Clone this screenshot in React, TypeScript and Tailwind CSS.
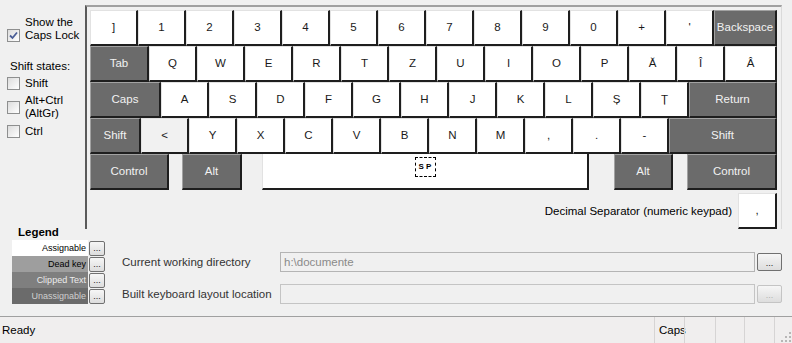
import type { ReactNode } from 'react'

const keyBase =
  'flex h-[36px] shrink-0 items-center justify-center border-t border-l border-r-2 border-b-2 border-r-[#1e1e1e] border-b-[#1e1e1e] text-[11.5px]'
const lightKey = 'bg-white border-t-[#e2e2e2] border-l-[#e2e2e2] text-[#1a1a1a]'
const darkKey = 'bg-[#6b6b6b] border-t-[#a2a2a2] border-l-[#a2a2a2] text-[#f2f2f2]'

function Key({ label, className, dark }: { label?: ReactNode; className: string; dark?: boolean }) {
  return <div className={`${keyBase} ${dark ? darkKey : lightKey} ${className}`}>{label}</div>
}

function Checkbox({ checked }: { checked?: boolean }) {
  return (
    <span className="flex size-[13px] shrink-0 items-center justify-center border border-[#8e8f8f] bg-gradient-to-br from-[#dcdcdc] to-white">
      {checked ? (
        <svg width="11" height="11" viewBox="0 0 11 11">
          <path d="M2 5.5 L4.5 8 L9 2.5" fill="none" stroke="#4a5d96" strokeWidth="1.8" />
        </svg>
      ) : null}
    </span>
  )
}

function EllipsisButton({ disabled, className }: { disabled?: boolean; className: string }) {
  return (
    <div
      className={`flex shrink-0 items-end justify-center rounded-[2px] border bg-gradient-to-b from-[#f6f6f6] to-[#dddddd] pb-[2px] text-[9px] leading-none ${
        disabled ? 'border-[#c4c4c4] text-[#b0b0b0]' : 'border-[#707070] text-[#222]'
      } ${className}`}
    >
      ...
    </div>
  )
}

const row1 = [']', '1', '2', '3', '4', '5', '6', '7', '8', '9', '0', '+', "'"]
const row2 = ['Q', 'W', 'E', 'R', 'T', 'Z', 'U', 'I', 'O', 'P', 'Ă', 'Î']
const row3 = ['A', 'S', 'D', 'F', 'G', 'H', 'J', 'K', 'L', 'Ș', 'Ț']
const row4 = ['Y', 'X', 'C', 'V', 'B', 'N', 'M', ',', '.', '-']

const legend = [
  { label: 'Assignable', className: 'bg-white text-black' },
  { label: 'Dead key', className: 'bg-[#9e9e9e] text-black' },
  { label: 'Clipped Text', className: 'bg-[#7f7f7f] text-[#ececec]' },
  { label: 'Unassignable', className: 'bg-[#6b6b6b] text-[#cfcfcf]' },
]

export default function App() {
  return (
    <div className="flex h-[343px] w-[792px] flex-col overflow-hidden bg-[#f0f0f0] font-['Liberation_Sans',Arial,sans-serif] text-[11.5px] leading-[13px] text-black">
      <div className="flex h-[229px] shrink-0">
        {/* shift state options */}
        <div className="flex w-[85px] shrink-0 flex-col pl-[7px] pt-[16px]">
          <div className="flex gap-[5px]">
            <span className="mt-[13px]">
              <Checkbox checked />
            </span>
            <span>
              Show the
              <br />
              Caps Lock
            </span>
          </div>
          <div className="mt-[18px] pl-[3px]">Shift states:</div>
          <div className="mt-[4px] flex items-center gap-[5px]">
            <Checkbox />
            <span>Shift</span>
          </div>
          <div className="mt-[4px] flex items-center gap-[5px]">
            <Checkbox />
            <span>
              Alt+Ctrl
              <br />
              (AltGr)
            </span>
          </div>
          <div className="mt-[5px] flex items-center gap-[5px]">
            <Checkbox />
            <span>Ctrl</span>
          </div>
        </div>

        {/* keyboard */}
        <div className="mt-[5px] h-[224px] w-[697px] shrink-0 border-t-2 border-l-2 border-r border-t-[#a0a0a0] border-l-[#5a5a5a] border-r-[#dadada] pl-[3px] pt-[3px]">
          <div className="flex">
            {row1.map((k) => (
              <Key key={k} label={k} className="w-[48px]" />
            ))}
            <Key label="Backspace" dark className="w-[63px]" />
          </div>
          <div className="flex">
            <Key label="Tab" dark className="w-[59px]" />
            {row2.map((k) => (
              <Key key={k} label={k} className="w-[48px]" />
            ))}
            <Key label="Â" className="w-[52px]" />
          </div>
          <div className="flex">
            <Key label="Caps" dark className="w-[71px]" />
            {row3.map((k) => (
              <Key key={k} label={k} className="w-[48px]" />
            ))}
            <Key label="Return" dark className="w-[88px]" />
          </div>
          <div className="flex">
            <Key label="Shift" dark className="w-[51px]" />
            <Key label="<" className="w-[48px] !bg-[#f1f1f1]" />
            {row4.map((k) => (
              <Key key={k} label={k} className="w-[48px]" />
            ))}
            <Key label="Shift" dark className="w-[108px]" />
          </div>
          <div className="flex">
            <Key label="Control" dark className="w-[79px]" />
            <Key label="Alt" dark className="ml-[13px] w-[60px]" />
            <div className="ml-[20px] flex h-[36px] w-[327px] shrink-0 justify-center border-l border-r-2 border-b-2 border-l-[#e2e2e2] border-r-[#1e1e1e] border-b-[#1e1e1e] bg-white pt-[3px]">
              <div className="flex h-[20px] w-[21px] items-center justify-center border border-dashed border-black text-[8px] font-bold leading-none">
                S P
              </div>
            </div>
            <Key label="Alt" dark className="ml-[25px] w-[59px]" />
            <Key label="Control" dark className="ml-[14px] w-[90px]" />
          </div>
          <div className="mt-[3px] flex w-[687px] items-center justify-end">
            <span className="mr-[6px]">Decimal Separator (numeric keypad)</span>
            <Key label="," className="w-[39px]" />
          </div>
        </div>
      </div>

      <div className="-mt-[5px] flex">
        {/* legend */}
        <div className="w-[105px] shrink-0 pl-[12px]">
          <div className="h-[16px] pl-[6px] pt-[2px] font-bold">Legend</div>
          {legend.map((l) => (
            <div key={l.label} className="flex h-[16px] items-center">
              <div className={`flex h-[16px] w-[76px] items-center justify-end pr-[2px] text-[9px] ${l.className}`}>
                {l.label}
              </div>
              <EllipsisButton className="ml-[1px] h-[15px] w-[16px]" />
            </div>
          ))}
        </div>

        {/* paths */}
        <div className="ml-[17px] flex flex-col pt-[28px]">
          <div className="flex h-[20px] items-center">
            <span className="w-[158px] shrink-0 text-[#333]">Current working directory</span>
            <div className="flex h-[20px] w-[475px] items-center border border-[#b4b4b4] pl-[3px] text-[#8a8a8a]">
              h:\documente
            </div>
            <EllipsisButton className="ml-[2px] h-[18px] w-[25px]" />
          </div>
          <div className="mt-[12px] flex h-[20px] items-center">
            <span className="w-[158px] shrink-0 text-[#333]">Built keyboard layout location</span>
            <div className="h-[20px] w-[475px] border border-[#c4c4c4]" />
            <EllipsisButton disabled className="ml-[2px] h-[18px] w-[25px]" />
          </div>
        </div>
      </div>

      {/* status bar */}
      <div className="mt-auto flex h-[27px] shrink-0 items-center border-t border-[#a0a0a0] bg-[#f0eeee]">
        <span className="w-[654px] shrink-0 pl-[2px]">Ready</span>
        <span className="flex h-full w-[30px] items-center border-l border-[#d6d4d4] pl-[4px]">Caps</span>
        <span className="h-full w-[31px] border-l border-[#d6d4d4]" />
        <span className="h-full w-[29px] border-l border-[#d6d4d4]" />
        <span className="h-full w-[30px] border-l border-[#d6d4d4]" />
        <span className="relative h-full flex-1 border-l border-[#d6d4d4]">
          <svg className="absolute bottom-[1px] right-[1px]" width="11" height="11" viewBox="0 0 11 11">
            {[
              [9, 1],
              [9, 5],
              [5, 5],
              [9, 9],
              [5, 9],
              [1, 9],
            ].map(([x, y]) => (
              <rect key={`${x}-${y}`} x={x} y={y} width="2" height="2" fill="#b8b6b6" />
            ))}
          </svg>
        </span>
      </div>
    </div>
  )
}
